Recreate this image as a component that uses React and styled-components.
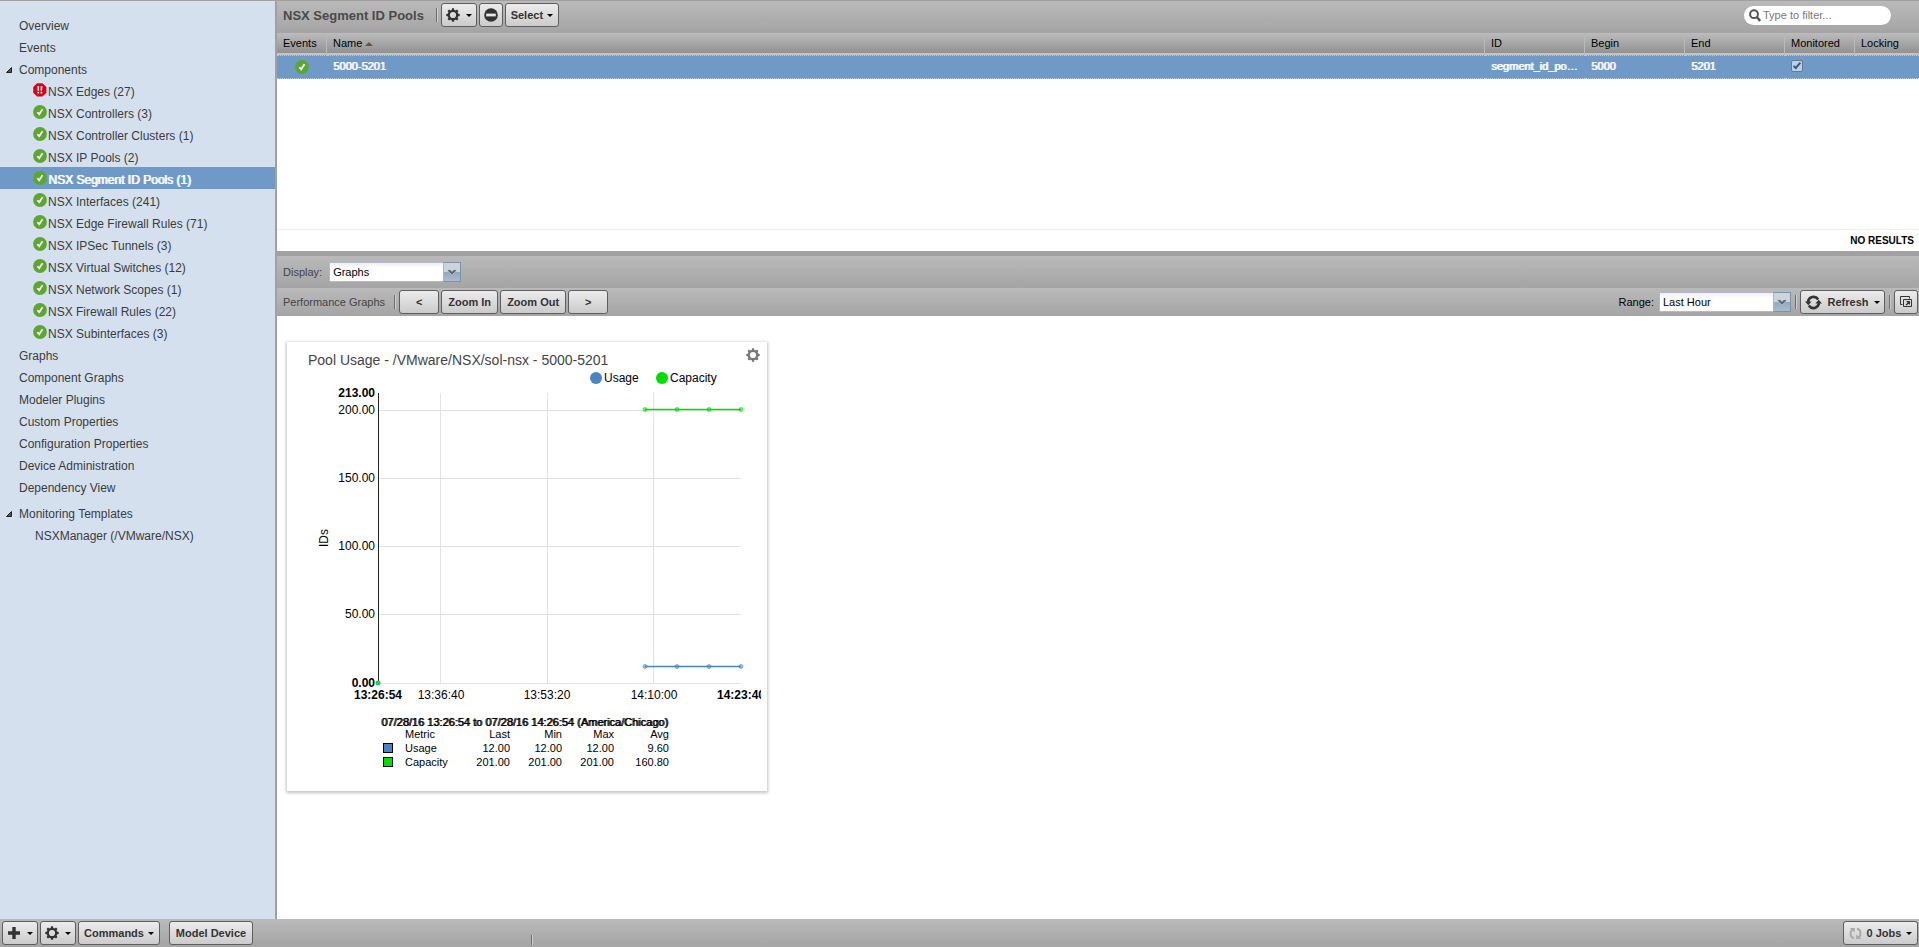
import React from "react";
import styled, { createGlobalStyle, css } from "styled-components";

const GlobalStyle = createGlobalStyle`
  *, *::before, *::after { box-sizing: border-box; }
  html, body, #root { height: 100%; }
  body {
    margin: 0;
    background: #fff;
    color: #000;
    font-family: "Liberation Sans", Arial, sans-serif;
    font-size: 11px;
    line-height: 14px;
  }
  button, input, select { font: inherit; margin: 0; }
  svg { flex: none; }
`;

const barGradient = css`
  background: linear-gradient(#bababa, #a4a4a4);
`;

/* ---------- page frame ---------- */

const Page = styled.div`
  display: flex;
  flex-direction: column;
  min-height: 100%;
  border-top: 1px solid #a0a0a0;
`;

const Body = styled.div`
  display: flex;
  flex: 1;
`;

const Sidebar = styled.nav`
  flex: 0 0 277px;
  padding-top: 12px;
  background: #d4e0ee;
  border-right: 2px solid #a1a1a3;
`;

const Content = styled.main`
  display: flex;
  flex: 1;
  flex-direction: column;
  min-width: 0;
`;

/* ---------- navigation tree ---------- */

const NavList = styled.ul`
  margin: 0 0 4px;
  padding: 0;
  list-style: none;
`;

const NavItem = styled.a`
  display: flex;
  align-items: center;
  height: 22px;
  padding-left: ${(p) => (p.$depth === "component" ? 33 : p.$depth === "template" ? 34 : 5)}px;
  color: ${(p) => (p.$selected ? "#fff" : "#3c3c3c")};
  background: ${(p) => (p.$selected ? "#6f99c6" : "transparent")};
  text-shadow: ${(p) => (p.$selected ? "1px 0 currentColor" : "none")};
  font-size: 12px;
  text-decoration: none;
`;

const NavText = styled.span`
  padding: 3px 0 0 1px;
  line-height: 20px;
  white-space: nowrap;
`;

const ArrowSlot = styled.span`
  display: flex;
  width: 13px;
  padding: 3px 0 0 1px;
`;

/* ---------- bars and buttons ---------- */

const Toolbar = styled.div`
  ${barGradient}
  display: flex;
  align-items: center;
  height: ${(p) => p.$height}px;
  padding: 0 1px ${(p) => p.$bottom || 0}px 6px;
  color: #444;
`;

const Spacer = styled.div`
  flex: 1;
`;

const Title = styled.h1`
  margin: 0;
  padding-top: 2px;
  color: #4a4a4a;
  font-size: 13px;
  line-height: 16px;
`;

const Divider = styled.span`
  width: 2px;
  height: 14px;
  margin: ${(p) => p.$margin};
  border-left: 1px solid #6e6e6e;
  border-right: 1px solid #cfcfcf;
`;

const ButtonGroup = styled.div`
  display: flex;
  gap: 2px;
`;

const Button = styled.button`
  display: flex;
  align-items: center;
  justify-content: center;
  gap: ${(p) => p.$gap || 4}px;
  width: ${(p) => (p.$width ? `${p.$width}px` : "auto")};
  height: 24px;
  padding: 0 3px;
  border: 1px solid #5e5e5e;
  border-radius: 3px;
  background: linear-gradient(#ececec, #cbcbcb);
  color: #333;
  font-size: 11px;
  font-weight: bold;
  line-height: 14px;
  white-space: nowrap;
`;

const Caret = styled.span`
  border: 3px solid transparent;
  border-top-color: #000;
  border-bottom: 0;
`;

const FilterBox = styled.label`
  display: flex;
  align-items: center;
  gap: 2px;
  width: 147px;
  height: 19px;
  margin-right: 27px;
  padding-left: 5px;
  border-radius: 10px;
  background: #fff;
`;

const FilterInput = styled.input`
  flex: 1;
  min-width: 0;
  padding: 0;
  border: 0;
  outline: 0;
  background: transparent;
  font-size: 11px;
  &::placeholder { color: #777; opacity: 1; }
`;

const Combo = styled.span`
  position: relative;
  display: flex;
  width: 132px;
  height: 20px;
`;

const ComboSelect = styled.select`
  flex: 1;
  appearance: none;
  padding: 0 20px 0 3px;
  border: 1px solid #b5b8c8;
  border-radius: 0;
  background: linear-gradient(#eee, #fff 5px);
  color: #000;
  font-size: 11px;
`;

const ComboTrigger = styled.span`
  position: absolute;
  top: 0;
  right: 0;
  display: flex;
  align-items: center;
  justify-content: center;
  width: 18px;
  height: 20px;
  border: 1px solid #7e93aa;
  border-left-color: #a9b6c4;
  background: linear-gradient(#c9d4df 50%, #93a9bd 50%, #a9bccd);
  pointer-events: none;
`;

const FieldLabel = styled.label`
  color: ${(p) => (p.$dark ? "#000" : "#444")};
  margin-right: ${(p) => p.$gap}px;
`;

/* ---------- component grid ---------- */

const GridPanel = styled.section`
  display: flex;
  flex-direction: column;
  min-height: 250px;
`;

const GridTable = styled.table`
  width: 100%;
  table-layout: fixed;
  border-collapse: separate;
  border-spacing: 0;
`;

const HeadCell = styled.th`
  height: 22px;
  padding: 0 0 2px 6px;
  background: linear-gradient(#bcbcbc, #929292 20px, #c4c4c4 20px);
  border-right: 1px solid #b9b9b9;
  font-weight: normal;
  text-align: left;
  &:last-child { border-right: 0; }
`;

const SortMark = styled.span`
  display: inline-block;
  margin-left: 3px;
  vertical-align: middle;
  border: 4px solid transparent;
  border-top: 0;
  border-bottom-color: #6b5238;
`;

const Cell = styled.td`
  height: 24px;
  padding: 0 0 2px ${(p) => (p.$icon ? 18 : 6)}px;
  border-top: 1px dotted #b4cbe6;
  border-bottom: 1px dotted #b4cbe6;
  background: #6f99c6;
  color: #fff;
  text-shadow: 1px 0 currentColor;
  white-space: nowrap;
  svg { display: block; position: relative; top: 1px; }
`;

const Tick = styled.input`
  appearance: none;
  display: block;
  width: 12px;
  height: 12px;
  border: 1px solid #647990;
  border-radius: 2px;
  background: #bccfe4;
  &:checked::after {
    content: "";
    display: block;
    width: 4px;
    height: 8px;
    margin: 0 0 0 3px;
    border: solid #3b5a7c;
    border-width: 0 2px 2px 0;
    transform: rotate(40deg);
  }
`;

const GridFooter = styled.div`
  margin-top: auto;
  padding: 4px 5px 3px;
  border-top: 1px solid #ededed;
  font-size: 10px;
  font-weight: bold;
  text-align: right;
`;

const Splitter = styled.div`
  height: 5px;
  background: #a1a1a1;
`;

/* ---------- graph card ---------- */

const GraphArea = styled.section`
  flex: 1;
  padding: 26px 10px;
`;

const Card = styled.article`
  width: 480px;
  padding: 6px 6px 22px;
  background: #fff;
  box-shadow: 0 1px 3px 1px rgba(0, 0, 0, 0.24);
`;

const CardHead = styled.header`
  display: flex;
  align-items: flex-start;
  justify-content: space-between;
  padding-left: 15px;
`;

const CardTitle = styled.h2`
  margin: 0;
  padding-top: 4px;
  color: #444;
  font-size: 14px;
  font-weight: normal;
  line-height: 16px;
`;

const IconButton = styled.button`
  display: flex;
  padding: 0 1px 0 0;
  border: 0;
  background: none;
`;

const Chart = styled.svg`
  display: block;
  font-size: 12px;
`;

const StatsTable = styled.table`
  width: 288px;
  margin: 14px 0 0 88px;
  table-layout: fixed;
  border-collapse: collapse;
  caption {
    text-align: left;
    text-shadow: 1px 0 currentColor;
    line-height: 12px;
    white-space: nowrap;
  }
  th, td { padding: 0; font-weight: normal; text-align: right; line-height: 13px; }
  td { line-height: 14px; }
  th:nth-child(2) { text-align: left; }
`;

const Swatch = styled.span`
  display: block;
  width: 10px;
  height: 10px;
  margin-left: 2px;
  border: 1px solid #000;
  background: ${(p) => p.$color};
`;

/* ---------- footer ---------- */

const FooterBar = styled.footer`
  ${barGradient}
  display: flex;
  align-items: center;
  height: 28px;
  padding: 0 1px 0 2px;
`;

const FooterActions = styled.div`
  display: flex;
  align-items: center;
  flex: 0 0 529px;
  gap: 9px;
`;

const FooterMark = styled.span`
  align-self: flex-end;
  width: 2px;
  height: 10px;
  margin-bottom: 2px;
  border-left: 1px solid #6e6e6e;
  border-right: 1px solid #cfcfcf;
`;

/* ---------- icons ---------- */

const GearIcon = ({ size = 14, color = "#333" }) => (
  <svg width={size} height={size} viewBox="0 0 14 14" aria-hidden="true">
    <circle cx="7" cy="7" r="4.2" fill="none" stroke={color} strokeWidth="2.2" />
    {[0, 45, 90, 135, 180, 225, 270, 315].map((a) => (
      <path key={a} d="M5.6 2.4 6 .3h2l.4 2.1z" fill={color} transform={`rotate(${a} 7 7)`} />
    ))}
  </svg>
);

const OkIcon = () => (
  <svg width="14" height="14" viewBox="0 0 14 14" aria-hidden="true">
    <circle cx="7" cy="7" r="6.9" fill="#5ca632" />
    <path d="M4.4 7.3 6.2 9.3 9.5 4.3" fill="none" stroke="#fff" strokeWidth="1.7" />
  </svg>
);

const CriticalIcon = () => (
  <svg width="14" height="14" viewBox="0 0 14 14" aria-hidden="true">
    <path d="M4.1.2h5.4l3.9 3.9v5.6l-3.9 3.9H4.1L.2 9.7V4.1z" fill="#dc0017" />
    <path d="M4.2 3.3h1.9v4.5H4.7zM7.6 3.3h1.9L9 7.8H7.6zM4.5 8.8h1.6v1.7H4.5zM7.6 8.8h1.6v1.7H7.6z" fill="#fff" />
  </svg>
);

const MinusIcon = () => (
  <svg width="14" height="14" viewBox="0 0 14 14" aria-hidden="true">
    <circle cx="7" cy="7" r="6.8" fill="#333" />
    <path d="M2.2 5.6h9.6v2.8H2.2z" fill="#e8e8e8" />
  </svg>
);

const PlusIcon = () => (
  <svg width="12" height="12" viewBox="0 0 12 12" aria-hidden="true">
    <path d="M4.3 0h3.4v4.3H12v3.4H7.7V12H4.3V7.7H0V4.3h4.3z" fill="#333" />
  </svg>
);

const SearchIcon = () => (
  <svg width="12" height="13" viewBox="0 0 12 13" aria-hidden="true">
    <circle cx="5" cy="5.2" r="3.9" fill="none" stroke="#555" strokeWidth="2" />
    <path d="m7.8 8 3.4 4" stroke="#555" strokeWidth="2.4" />
  </svg>
);

const ExpandedArrow = () => (
  <svg width="6" height="6" viewBox="0 0 6 6" aria-hidden="true">
    <path d="M5.5.5v5h-5z" fill="#555" stroke="#222" strokeWidth="1" />
  </svg>
);

const ChevronIcon = () => (
  <svg width="10" height="7" viewBox="0 0 10 7" aria-hidden="true">
    <path d="M.5.7h2.7L5 2.4 6.8.7h2.7v1L5 6 .5 1.7z" fill="#5d6673" stroke="#e2e8ee" strokeWidth=".5" />
  </svg>
);

const RefreshIcon = () => (
  <svg width="17" height="15" viewBox="0 0 17 15" aria-hidden="true">
    <path d="M3 6.8A5.6 5.6 0 0 1 13.2 4.4M14 8.2A5.6 5.6 0 0 1 3.8 10.600" fill="none" stroke="#333" strokeWidth="2.6" />
    <path d="M0 6.400h6.600L3.300 10.200zM10.400 8.600H17l-3.300-3.800z" fill="#333" />
  </svg>
);

const JobsIcon = () => (
  <svg width="13" height="13" viewBox="0 0 13 13" aria-hidden="true">
    <path d="M5 11.2C.8 10.4.5 5 3.300 2.400M8 1.800c4.200.8 4.500 6.200 1.700 8.800" fill="none" stroke="#aaa" strokeWidth="2" />
    <path d="M.8 1h5v4.400zM12.200 12h-5V7.600z" fill="#aaa" />
  </svg>
);

const PopoutIcon = () => (
  <svg width="12" height="12" viewBox="0 0 12 12" aria-hidden="true">
    <path d="M2.500 8.500h-2v-8h9v2M3.500 3.500h8v7h-8z" fill="none" stroke="#333" />
    <path d="M6 5h4v4L8.700 7.700 6.500 9.600l-.9-.9 2-2.100z" fill="#333" />
  </svg>
);

/* ---------- data ---------- */

const components = [
  ["NSX Edges (27)", "critical"],
  ["NSX Controllers (3)"],
  ["NSX Controller Clusters (1)"],
  ["NSX IP Pools (2)"],
  ["NSX Segment ID Pools (1)", "selected"],
  ["NSX Interfaces (241)"],
  ["NSX Edge Firewall Rules (71)"],
  ["NSX IPSec Tunnels (3)"],
  ["NSX Virtual Switches (12)"],
  ["NSX Network Scopes (1)"],
  ["NSX Firewall Rules (22)"],
  ["NSX Subinterfaces (3)"],
];

const pages = [
  "Graphs",
  "Component Graphs",
  "Modeler Plugins",
  "Custom Properties",
  "Configuration Properties",
  "Device Administration",
  "Dependency View",
];

const USAGE = "#4684c6";
const CAPACITY = "#00dd00";

const stats = [
  { name: "Usage", color: USAGE, values: ["12.00", "12.00", "12.00", "9.60"] },
  { name: "Capacity", color: CAPACITY, values: ["201.00", "201.00", "201.00", "160.80"] },
];

const yTicks = [
  ["213.00", 13, true],
  ["200.00", 30],
  ["150.00", 98],
  ["100.00", 166],
  ["50.00", 234],
  ["0.00", 303, true],
];

const xTicks = [
  ["13:26:54", 85, true],
  ["13:36:40", 148],
  ["13:53:20", 254],
  ["14:10:00", 361],
  ["14:23:40", 448, true],
];

/* ---------- parts ---------- */

function TreeRow({ label, depth, selected, icon, expanded }) {
  return (
    <li>
      <NavItem href="#" $depth={depth} $selected={selected} aria-current={selected ? "page" : undefined}>
        {!depth && <ArrowSlot>{expanded && <ExpandedArrow />}</ArrowSlot>}
        {icon}
        <NavText>{label}</NavText>
      </NavItem>
    </li>
  );
}

function ComboBox({ id, value }) {
  return (
    <Combo>
      <ComboSelect id={id} defaultValue={value}>
        <option>{value}</option>
      </ComboSelect>
      <ComboTrigger><ChevronIcon /></ComboTrigger>
    </Combo>
  );
}

function Series({ y, color }) {
  return (
    <g>
      <path d={`M352 ${y}h96`} stroke={color} strokeWidth="1.5" />
      {[352, 384, 416, 448].map((x) => (
        <circle key={x} cx={x} cy={y} r="2" fill={color} fillOpacity=".5" stroke={color} strokeOpacity=".6" />
      ))}
    </g>
  );
}

function PoolChart() {
  return (
    <Chart width="468" height="334" viewBox="0 0 468 334" role="img" aria-label="Pool Usage">
      <circle cx="303" cy="10" r="6" fill={USAGE} />
      <text x="311" y="14">Usage</text>
      <circle cx="369" cy="10" r="6" fill={CAPACITY} />
      <text x="377" y="14">Capacity</text>
      <g stroke="#e2e2e2" shapeRendering="crispEdges">
        {[42, 110, 178, 246, 315].map((y) => <path key={y} d={`M86 ${y}.5H448`} />)}
        {[147, 254, 360].map((x) => <path key={x} d={`M${x}.5 25V315`} />)}
      </g>
      <path d="M85.5 25V315" stroke="#222" shapeRendering="crispEdges" />
      {yTicks.map(([t, y, bold]) => (
        <text key={t} x="82" y={y + 16} textAnchor="end" fontWeight={bold ? "bold" : "normal"}>{t}</text>
      ))}
      {xTicks.map(([t, x, bold]) => (
        <text key={t} x={x} y="331" textAnchor="middle" fontWeight={bold ? "bold" : "normal"}>{t}</text>
      ))}
      <text transform="translate(35 170) rotate(-90)" textAnchor="middle">IDs</text>
      <Series y={41.5} color={CAPACITY} />
      <Series y={298.5} color={USAGE} />
      <circle cx="85" cy="315" r="2.5" fill="#2bc84a" />
    </Chart>
  );
}

export default function App() {
  return (
    <>
      <GlobalStyle />
      <Page>
        <Body>
          <Sidebar>
            <NavList>
              <TreeRow label="Overview" />
              <TreeRow label="Events" />
              <TreeRow label="Components" expanded />
              {components.map(([label, state]) => (
                <TreeRow
                  key={label}
                  label={label}
                  depth="component"
                  selected={state === "selected"}
                  icon={state === "critical" ? <CriticalIcon /> : <OkIcon />}
                />
              ))}
              {pages.map((label) => <TreeRow key={label} label={label} />)}
            </NavList>
            <NavList>
              <TreeRow label="Monitoring Templates" expanded />
              <TreeRow label="NSXManager (/VMware/NSX)" depth="template" />
            </NavList>
          </Sidebar>

          <Content>
            <GridPanel>
              <Toolbar $height={32} $bottom={4}>
                <Title>NSX Segment ID Pools</Title>
                <Divider $margin="0 3px 0 12px" />
                <ButtonGroup>
                  <Button $width={36} $gap={6} aria-label="Configure"><GearIcon /><Caret /></Button>
                  <Button $width={24} aria-label="Remove"><MinusIcon /></Button>
                  <Button $width={54}>Select<Caret /></Button>
                </ButtonGroup>
                <Spacer />
                <FilterBox>
                  <SearchIcon />
                  <FilterInput type="text" placeholder="Type to filter..." aria-label="Filter" />
                </FilterBox>
              </Toolbar>
              <GridTable>
                <colgroup>
                  <col width="50" />
                  <col />
                  <col width="100" />
                  <col width="100" />
                  <col width="100" />
                  <col width="70" />
                  <col width="64" />
                </colgroup>
                <thead>
                  <tr>
                    <HeadCell>Events</HeadCell>
                    <HeadCell>Name<SortMark /></HeadCell>
                    <HeadCell>ID</HeadCell>
                    <HeadCell>Begin</HeadCell>
                    <HeadCell>End</HeadCell>
                    <HeadCell>Monitored</HeadCell>
                    <HeadCell>Locking</HeadCell>
                  </tr>
                </thead>
                <tbody>
                  <tr>
                    <Cell $icon><OkIcon /></Cell>
                    <Cell>5000-5201</Cell>
                    <Cell>segment_id_po…</Cell>
                    <Cell>5000</Cell>
                    <Cell>5201</Cell>
                    <Cell><Tick type="checkbox" defaultChecked aria-label="Monitored" /></Cell>
                    <Cell />
                  </tr>
                </tbody>
              </GridTable>
              <GridFooter>NO RESULTS</GridFooter>
            </GridPanel>

            <Splitter />

            <Toolbar $height={32}>
              <FieldLabel htmlFor="display" $gap={7}>Display:</FieldLabel>
              <ComboBox id="display" value="Graphs" />
            </Toolbar>
            <Toolbar $height={28}>
              <span>Performance Graphs</span>
              <Divider $margin="0 3px 0 9px" />
              <ButtonGroup>
                <Button $width={40}>&lt;</Button>
                <Button $width={57}>Zoom In</Button>
                <Button $width={66}>Zoom Out</Button>
                <Button $width={40}>&gt;</Button>
              </ButtonGroup>
              <Spacer />
              <FieldLabel htmlFor="range" $gap={5} $dark>Range:</FieldLabel>
              <ComboBox id="range" value="Last Hour" />
              <Divider $margin="0 3px 0 4px" />
              <Button $width={85} $gap={6}><RefreshIcon />Refresh<Caret /></Button>
              <Divider $margin="0 3px 0 4px" />
              <Button $width={24} aria-label="Pop out"><PopoutIcon /></Button>
            </Toolbar>

            <GraphArea>
              <Card>
                <CardHead>
                  <CardTitle>Pool Usage - /VMware/NSX/sol-nsx - 5000-5201</CardTitle>
                  <IconButton aria-label="Graph options"><GearIcon color="#777" /></IconButton>
                </CardHead>
                <PoolChart />
                <StatsTable>
                  <caption>07/28/16 13:26:54 to 07/28/16 14:26:54 (America/Chicago)</caption>
                  <colgroup>
                    <col width="24" />
                    <col width="52" />
                    <col width="53" />
                    <col width="52" />
                    <col width="52" />
                    <col width="55" />
                  </colgroup>
                  <thead>
                    <tr>
                      <td />
                      <th>Metric</th>
                      <th>Last</th>
                      <th>Min</th>
                      <th>Max</th>
                      <th>Avg</th>
                    </tr>
                  </thead>
                  <tbody>
                    {stats.map((row) => (
                      <tr key={row.name}>
                        <td><Swatch $color={row.color} /></td>
                        <th scope="row">{row.name}</th>
                        {row.values.map((v, i) => <td key={i}>{v}</td>)}
                      </tr>
                    ))}
                  </tbody>
                </StatsTable>
              </Card>
            </GraphArea>
          </Content>
        </Body>

        <FooterBar>
          <FooterActions>
            <ButtonGroup>
              <Button $width={36} $gap={7} aria-label="Add"><PlusIcon /><Caret /></Button>
              <Button $width={36} $gap={6} aria-label="Device settings"><GearIcon /><Caret /></Button>
              <Button $width={82}>Commands<Caret /></Button>
            </ButtonGroup>
            <Button $width={84}>Model Device</Button>
          </FooterActions>
          <FooterMark />
          <Spacer />
          <Button $width={75} $gap={5}><JobsIcon />0 Jobs<Caret /></Button>
        </FooterBar>
      </Page>
    </>
  );
}
